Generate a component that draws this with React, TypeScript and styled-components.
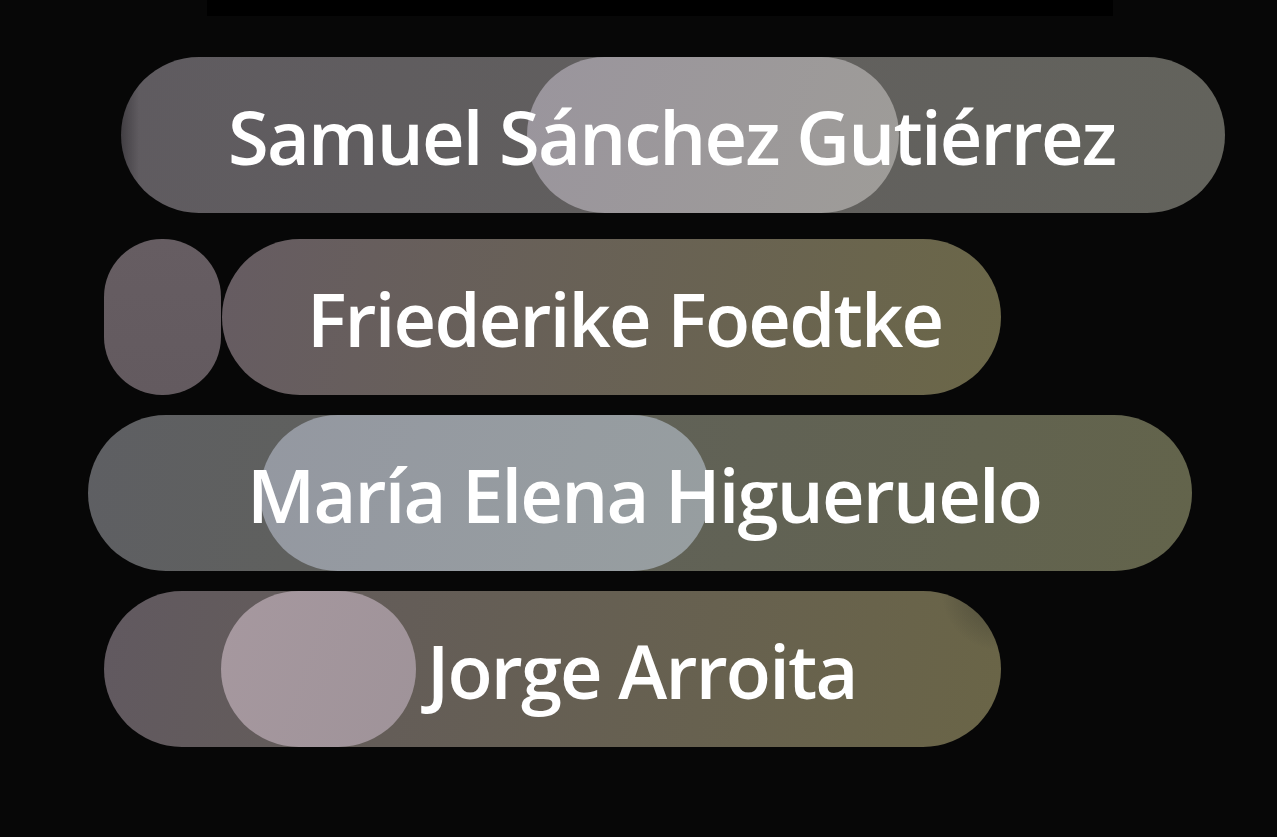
import React from 'react';
import styled, { createGlobalStyle } from 'styled-components';

const GlobalStyle = createGlobalStyle`
  html, body {
    margin: 0;
    padding: 0;
    background: #070707;
  }
  body {
    font-family: 'Open Sans', 'Noto Sans', sans-serif;
  }
`;

const Page = styled.div`
  width: 1277px;
  height: 837px;
  overflow: hidden;
  display: flex;
  flex-direction: column;
`;

const TopBar = styled.div`
  margin-left: 207px;
  width: 906px;
  height: 16px;
  background: #000;
  flex-shrink: 0;
`;

const List = styled.div`
  display: flex;
  flex-direction: column;
  margin-top: 41px;
`;

const Row = styled.div<{ offset: number; spaceAbove: number }>`
  display: flex;
  gap: 1px;
  margin-left: ${p => p.offset}px;
  margin-top: ${p => p.spaceAbove}px;
`;

const Nub = styled.div`
  width: 117px;
  height: 156px;
  border-radius: 58px;
  background: linear-gradient(180deg, #665d62 0%, #635a5f 100%);
  flex-shrink: 0;
`;

const Pill = styled.div<{ width: number; from: string; to: string; shade?: string }>`
  position: relative;
  width: ${p => p.width}px;
  height: 156px;
  border-radius: 78px;
  background: ${p => (p.shade ? `${p.shade}, ` : '')}linear-gradient(100deg, ${p => p.from} 0%, ${p => p.to} 100%);
  overflow: hidden;
  display: flex;
  align-items: center;
  flex-shrink: 0;
`;

const Highlight = styled.div<{ left: number; width: number; from: string; to: string }>`
  position: absolute;
  top: 0;
  bottom: 0;
  left: ${p => p.left}px;
  width: ${p => p.width}px;
  border-radius: 78px;
  background: linear-gradient(110deg, ${p => p.from} 0%, ${p => p.to} 100%);
`;

const Name = styled.span<{ indent: number }>`
  position: relative;
  padding-left: ${p => p.indent}px;
  color: #fff;
  font-size: 74px;
  font-weight: 600;
  line-height: 1;
  white-space: nowrap;
  letter-spacing: -1.8px;
  margin-top: 4px;
`;

type Entry = {
  name: string;
  offset: number;
  spaceAbove: number;
  width: number;
  from: string;
  to: string;
  shade?: string;
  indent: number;
  nub?: boolean;
  highlight?: { left: number; width: number; from: string; to: string };
};

const entries: Entry[] = [
  {
    name: 'Samuel Sánchez Gutiérrez',
    offset: 121,
    spaceAbove: 0,
    width: 1104,
    from: '#5f5b60',
    to: '#63635c',
    shade: 'linear-gradient(90deg, rgba(30, 28, 32, 0.45) 0px, rgba(30, 28, 32, 0) 18px)',
    indent: 107,
    highlight: { left: 406, width: 372, from: '#9a959d', to: '#9e9c98' },
  },
  {
    name: 'Friederike Foedtke',
    offset: 104,
    spaceAbove: 26,
    width: 779,
    from: '#665c62',
    to: '#6b6748',
    indent: 85,
    nub: true,
  },
  {
    name: 'María Elena Higueruelo',
    offset: 88,
    spaceAbove: 20,
    width: 1104,
    from: '#5e5f63',
    to: '#63644b',
    indent: 159,
    highlight: { left: 172, width: 450, from: '#9498a1', to: '#979ea0' },
  },
  {
    name: 'Jorge Arroita',
    offset: 104,
    spaceAbove: 20,
    width: 897,
    from: '#615960',
    to: '#6a6547',
    shade: 'radial-gradient(circle at 100% 0%, rgba(40, 42, 38, 0.5) 0px, rgba(40, 42, 38, 0) 60px)',
    indent: 323,
    highlight: { left: 117, width: 195, from: '#a6989f', to: '#9f9399' },
  },
];

export default function App() {
  return (
    <>
      <GlobalStyle />
      <Page>
        <TopBar />
        <List>
          {entries.map(e => (
            <Row key={e.name} offset={e.offset} spaceAbove={e.spaceAbove}>
              {e.nub && <Nub />}
              <Pill width={e.width} from={e.from} to={e.to} shade={e.shade}>
                {e.highlight && <Highlight {...e.highlight} />}
                <Name indent={e.indent}>{e.name}</Name>
              </Pill>
            </Row>
          ))}
        </List>
      </Page>
    </>
  );
}
